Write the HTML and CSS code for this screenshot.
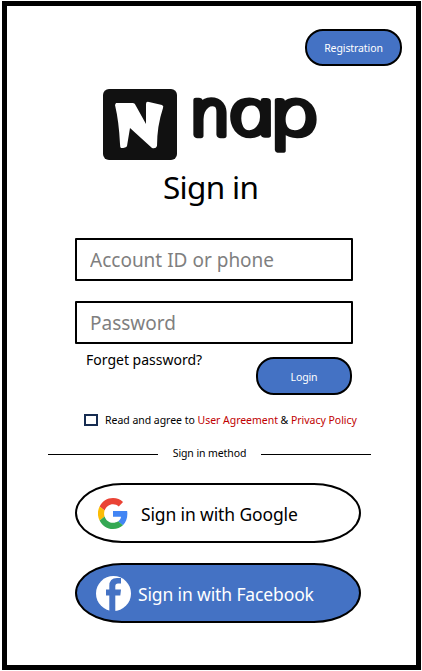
FILE: index.html
```html
<!DOCTYPE html>
<html lang="en">
<head>
<meta charset="utf-8">
<title>Sign in</title>
<link rel="stylesheet" href="styles.css">
</head>
<body>
<main class="frame">
  <header class="top"><button class="pill" type="button">Registration</button></header>
  <svg class="logo" width="216" height="74" viewBox="0 0 216 74" role="img" aria-label="nap">
    <rect x="1" y="1" width="74" height="71" rx="6" fill="#111"/>
    <path d="M14 15H31Q33 15 34 18L44 36V16Q44 13 47 14L60 17Q62 18 61 20Q55 38 55 58Q54 61 50 60L28 40L25 58Q24 60 19 60Q18 59 18 56Q17 34 13 17Z" fill="#fff"/>
    <g class="wordmark">
      <text class="wide-stroke" transform="translate(-5.2 47.4) scale(1.1 1.05) skewX(12)" x="89">n</text>
      <text transform="translate(-39.9 47.4) scale(1.35 1.06) skewX(12)" x="127">a</text>
      <text transform="translate(-57 47.4) scale(1.35 1.06) skewX(12)" x="171">p</text>
    </g>
  </svg>
  <h1 class="title"><span>Sign in</span></h1>
  <form class="form">
    <input class="field" type="text" placeholder="Account ID or phone" aria-label="Account ID or phone">
    <input class="field" type="password" placeholder="Password" aria-label="Password">
    <div class="actions"><a class="forgot">Forget password?</a><button class="pill" type="button">Login</button></div>
    <label class="agree"><input class="check" type="checkbox"><span>Read and agree to <a>User Agreement</a> &amp; <a>Privacy Policy</a></span></label>
  </form>
  <div class="divider"><span>Sign in method</span></div>
  <button class="social google" type="button">
    <svg width="30" height="31" viewBox="0 0 48 48" preserveAspectRatio="none">
      <path fill="#ea4335" d="M24 9.5c3.54 0 6.71 1.22 9.21 3.6l6.85-6.85C35.9 2.38 30.47 0 24 0 14.62 0 6.51 5.38 2.56 13.22l7.98 6.19C12.43 13.72 17.74 9.5 24 9.5z"/>
      <path fill="#4285f4" d="M46.98 24.55c0-1.57-.15-3.09-.38-4.55H24v9.02h12.94c-.58 2.96-2.26 5.48-4.78 7.18l7.73 6c4.51-4.18 7.09-10.36 7.09-17.65z"/>
      <path fill="#fbbc05" d="M10.53 28.59a14.5 14.5 0 0 1 0-9.18l-7.98-6.19a24 24 0 0 0 0 21.56z"/>
      <path fill="#34a853" d="M24 48c6.48 0 11.93-2.13 15.89-5.81l-7.73-6c-2.15 1.45-4.92 2.3-8.16 2.3-6.26 0-11.57-4.22-13.47-9.91l-7.98 6.19C6.51 42.62 14.62 48 24 48z"/>
    </svg>
    <span>Sign in with Google</span>
  </button>
  <button class="social facebook" type="button">
    <svg width="35" height="35" viewBox="0 0 35 35">
      <circle cx="17.5" cy="17.5" r="17.5" fill="#fff"/>
      <path fill="#4472c4" d="M13.3 35V19.5H10V13.5H13.3V10Q13.3 2 21 2H25V7.5H22Q19.3 7.5 19.3 10.2V13.5H25L24.3 19.5H19.3V35Z"/>
    </svg>
    <span>Sign in with Facebook</span>
  </button>
</main>
</body>
</html>
```
FILE: styles.css
```css
* { box-sizing: border-box; }
body { margin: 0; padding: 1px 1px 1px 2px; background: #fff; font-family: "Noto Sans", sans-serif; color: #000; }
button, input { font-family: inherit; }
.frame { height: 669px; border: 5px solid #000; display: flex; flex-direction: column; align-items: flex-start; }
.top { align-self: stretch; display: flex; justify-content: flex-end; padding: 23px 14px 0 0; }
.pill { width: 97px; height: 37px; padding: 0; border: 2px solid #000; border-radius: 18px; background: #4472c4; color: #fff; font-size: 10.5px; letter-spacing: -0.1px; }
.logo { margin: 22px 0 0 95px; flex: none; overflow: visible; }
.wordmark text { font-family: "Open Sans", sans-serif; font-style: italic; font-weight: 300; font-size: 61px; fill: #111; stroke: #111; stroke-width: 5px; stroke-linejoin: round; }
.wordmark .wide-stroke { stroke-width: 6px; }
.title { margin: 5px 0 0 156px; font-size: 31.5px; font-weight: 400; line-height: 40px; letter-spacing: -0.7px; white-space: nowrap; }
.form { margin: 31px 0 0 68px; width: 300px; }
.field { display: block; width: 278px; height: 43px; margin: 0 0 20px; padding: 0 0 0 13px; border: 2px solid #000; border-radius: 1px; background: #fff; font-size: 19px; }
.field::placeholder { color: #7f7f7f; opacity: 1; }
.actions { display: flex; justify-content: space-between; width: 277px; height: 38px; margin-top: -7px; }
.actions .pill { width: 96px; height: 38px; padding-top: 2px; }
.forgot { padding-left: 11px; margin-top: -7px; font-size: 14px; line-height: 20px; }
.agree { display: flex; align-items: center; height: 16px; margin: 17px 0 0 9px; font-size: 10.5px; letter-spacing: -0.03px; white-space: nowrap; }
.check { appearance: none; width: 14px; height: 12px; margin: 0 7px 0 0; border: 2px solid #172c51; flex: none; }
.agree a { color: #c00000; }
.divider { display: flex; align-items: center; width: 323px; height: 16px; margin: 18px 0 0 41px; font-size: 10.5px; letter-spacing: -0.1px; white-space: nowrap; }
.divider::before, .divider::after { content: ""; width: 110px; height: 1px; background: #000; flex: none; }
.divider span { flex: 1; text-align: center; margin-top: -2px; }
.social { display: flex; align-items: center; width: 286px; height: 60px; margin: 21px 0 0 68px; padding: 0; border: 2px solid #000; border-radius: 47px / 30px; background: #fff; color: #000; font-size: 17.5px; letter-spacing: -0.13px; white-space: nowrap; }
.social span { padding-top: 2px; }
.google svg { margin: 0 13px 0 21px; }
.facebook { margin-top: 20px; background: #4472c4; color: #fff; }
.facebook svg { margin: 0 7px 0 19px; }
```
